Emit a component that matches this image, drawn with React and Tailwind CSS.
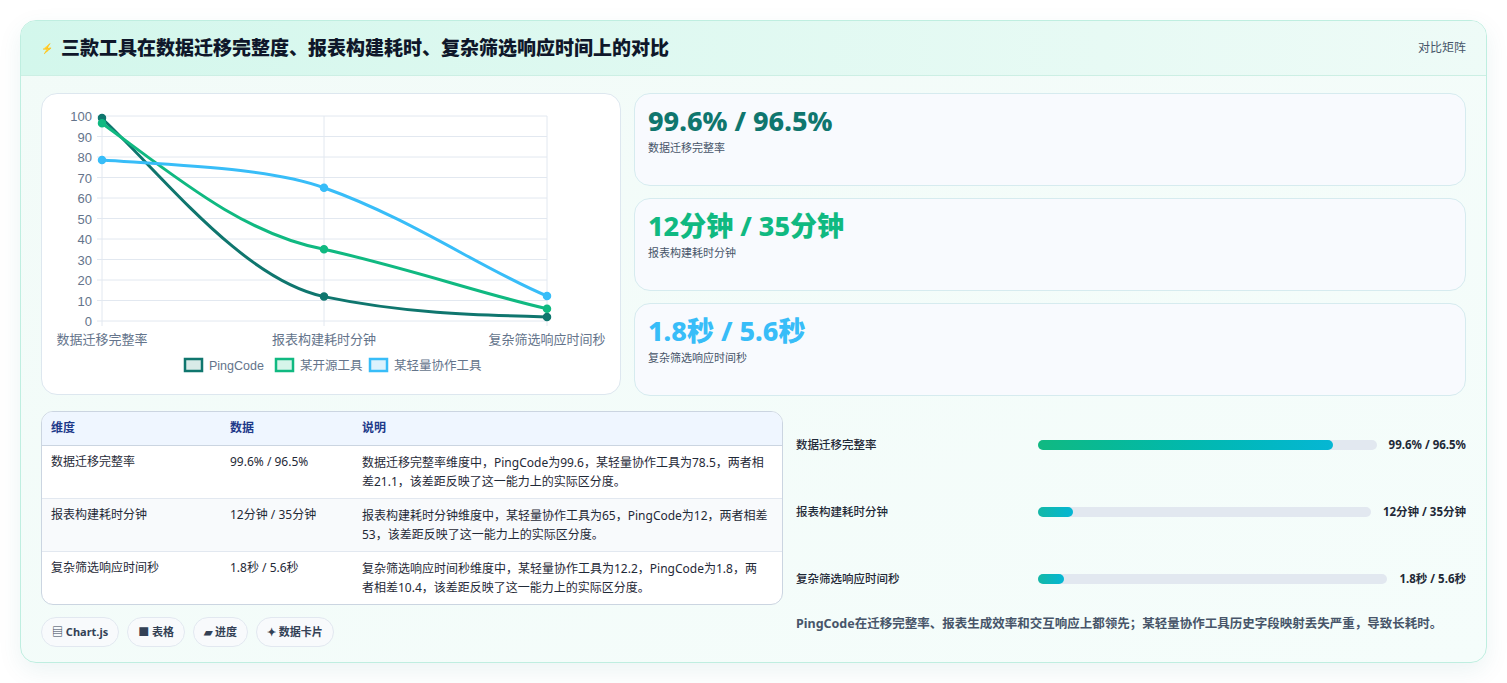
import React from 'react';

const font = { fontFamily: '"Noto Sans", "Noto Sans CJK SC", sans-serif' };

const stats = [
  { v: '99.6% / 96.5%', l: '数据迁移完整率', c: 'text-[#0f766e]' },
  { v: '12分钟 / 35分钟', l: '报表构建耗时分钟', c: 'text-[#10b981]' },
  { v: '1.8秒 / 5.6秒', l: '复杂筛选响应时间秒', c: 'text-[#38bdf8]' },
];

const rows = [
  ['数据迁移完整率', '99.6% / 96.5%', '数据迁移完整率维度中，PingCode为99.6，某轻量协作工具为78.5，两者相差21.1，该差距反映了这一能力上的实际区分度。'],
  ['报表构建耗时分钟', '12分钟 / 35分钟', '报表构建耗时分钟维度中，某轻量协作工具为65，PingCode为12，两者相差53，该差距反映了这一能力上的实际区分度。'],
  ['复杂筛选响应时间秒', '1.8秒 / 5.6秒', '复杂筛选响应时间秒维度中，某轻量协作工具为12.2，PingCode为1.8，两者相差10.4，该差距反映了这一能力上的实际区分度。'],
];

const bars = [
  { l: '数据迁移完整率', v: '99.6% / 96.5%', w: 87, from: 'from-[#10b981]', to: 'to-[#06b6d4]' },
  { l: '报表构建耗时分钟', v: '12分钟 / 35分钟', w: 10.5, from: 'from-[#14b8a6]', to: 'to-[#06b6d4]' },
  { l: '复杂筛选响应时间秒', v: '1.8秒 / 5.6秒', w: 7.5, from: 'from-[#14b8a6]', to: 'to-[#06b6d4]' },
];

const Chart = () => {
  const ticks = [0, 10, 20, 30, 40, 50, 60, 70, 80, 90, 100];
  const y = (v) => 227 - v * 2.05;
  const pts = [
    { c: '#0f766e', d: [99, 12, 2], p: 'M60,24.5 C120,80 200,185 282,202.6 C360,219 430,221 505,222.9' },
    { c: '#10b981', d: [96.5, 35, 6], p: 'M60,29.2 C130,80 200,140 282,155.25 C370,175 440,200 505,214.7' },
    { c: '#38bdf8', d: [78.5, 65, 12.2], p: 'M60,66 C150,72 230,75 282,93.75 C370,125 440,175 505,202' },
  ];
  const xs = [60, 282, 505];
  return (
    <svg width="578" height="300" viewBox="0 0 578 300" style={{ fontFamily: '"Liberation Sans", "Noto Sans CJK SC", sans-serif' }}>
      {ticks.map((t) => (
        <g key={t}>
          <line x1="55" x2="505" y1={y(t)} y2={y(t)} stroke="#e2e8f0" />
          <text x="50" y={y(t) + 5} fontSize="13" fill="#64748b" textAnchor="end">{t}</text>
        </g>
      ))}
      {xs.map((x) => <line key={x} x1={x} x2={x} y1={22} y2={232} stroke="#e2e8f0" />)}
      {['数据迁移完整率', '报表构建耗时分钟', '复杂筛选响应时间秒'].map((t, i) => (
        <text key={t} x={xs[i]} y="250" fontSize="13" fill="#64748b" textAnchor="middle">{t}</text>
      ))}
      {pts.map((s) => (
        <g key={s.c}>
          <path d={s.p} fill="none" stroke={s.c} strokeWidth="3" />
          {s.d.map((v, i) => <circle key={i} cx={xs[i]} cy={y(v)} r="3.5" fill={s.c} stroke={s.c} strokeWidth="1.5" />)}
        </g>
      ))}
      {[
        { x: 143, c: '#0f766e', bg: '#d9ebe8', t: 'PingCode' },
        { x: 234, c: '#10b981', bg: '#d6f5ea', t: '某开源工具' },
        { x: 328, c: '#38bdf8', bg: '#dbf2fd', t: '某轻量协作工具' },
      ].map((l) => (
        <g key={l.t}>
          <rect x={l.x} y="265" width="17" height="12" fill={l.bg} stroke={l.c} strokeWidth="2.5" />
          <text x={l.x + 24} y="276" fontSize="12.5" fill="#64748b">{l.t}</text>
        </g>
      ))}
    </svg>
  );
};

export default function App() {
  return (
    <div className="w-[1507px] h-[683px] bg-white pt-5 px-5" style={font}>
      <div className="w-[1467px] h-[643px] rounded-2xl border border-[#bfeee0] bg-gradient-to-br from-[#f2fbf8] to-[#f5fdfb] shadow-[0_8px_24px_rgba(15,118,110,0.08)] overflow-hidden">
        <div className="h-[55px] flex items-center justify-between px-5 bg-gradient-to-r from-[#d3f7ec] to-[#eefbf7] border-b border-[#ccefe4]">
          <div className="flex items-center gap-2">
            <span className="text-[#3b82f6] text-[10px]">⚡</span>
            <h1 className="text-[19px] font-extrabold text-[#0f172a]">三款工具在数据迁移完整度、报表构建耗时、复杂筛选响应时间上的对比</h1>
          </div>
          <span className="text-xs text-[#475569]">对比矩阵</span>
        </div>
        <div className="px-5 pt-[17px]">
          <div className="grid grid-cols-[580px_1fr] gap-[13px]">
            <div className="h-[302px] rounded-2xl border border-[#dde7ef] bg-white">
              <Chart />
            </div>
            <div className="flex flex-col gap-3">
              {stats.map((s) => (
                <div key={s.l} className="h-[93px] rounded-2xl border border-[#d6ebef] bg-[#f8fafe] px-[13px] pt-2">
                  <div className={`text-[27px] font-extrabold leading-[38px] ${s.c}`}>{s.v}</div>
                  <div className="text-[11px] text-[#475569]">{s.l}</div>
                </div>
              ))}
            </div>
          </div>
          <div className="grid grid-cols-[742px_1fr] gap-[13px] mt-[15px]">
            <div>
              <div className="rounded-xl border border-[#cbd5e1] bg-white overflow-hidden">
                <table className="w-full text-left text-[12px] text-[#1f2937]">
                  <thead>
                    <tr className="bg-[#eff6ff] border-b border-[#cbd5e1] text-[#1e3a8a]">
                      <th className="pl-[9px] h-[33px] w-[188px] font-bold">维度</th>
                      <th className="w-[132px] font-bold">数据</th>
                      <th className="pr-[14px] font-bold">说明</th>
                    </tr>
                  </thead>
                  <tbody>
                    {rows.map((r, i) => (
                      <tr key={i} className={`${i < 2 ? 'border-b border-[#e2e8f0]' : ''} ${i === 1 ? 'bg-[#f8fafc]' : ''} align-top`}>
                        <td className="pl-[9px] pt-[7px] h-[53px]">{r[0]}</td>
                        <td className="pt-[7px]">{r[1]}</td>
                        <td className="pt-[7px] pr-[14px] pb-1 leading-[19px]">{r[2]}</td>
                      </tr>
                    ))}
                  </tbody>
                </table>
              </div>
              <div className="flex gap-2 mt-3">
                {['▤ Chart.js', '■ 表格', '▰ 进度', '✦ 数据卡片'].map((t) => (
                  <span key={t} className="h-[30px] flex items-center px-[10px] rounded-full border border-[#e2e8f0] bg-[#f8fafc] text-[11px] font-bold text-[#334155]">{t}</span>
                ))}
              </div>
            </div>
            <div className="flex flex-col">
              {bars.map((b) => (
                <div key={b.l} className="h-[67px] flex items-center gap-3 text-[11.5px] font-bold text-[#1f2937]">
                  <span className="w-[230px] shrink-0 font-medium">{b.l}</span>
                  <div className="flex-1 h-[10px] rounded-full bg-[#e2e8f0]">
                    <div className={`h-full rounded-full bg-gradient-to-r ${b.from} ${b.to}`} style={{ width: `${b.w}%` }} />
                  </div>
                  <span className="shrink-0">{b.v}</span>
                </div>
              ))}
              <p className="mt-[3px] text-[12.5px] font-bold text-[#475569]">PingCode在迁移完整率、报表生成效率和交互响应上都领先；某轻量协作工具历史字段映射丢失严重，导致长耗时。</p>
            </div>
          </div>
        </div>
      </div>
    </div>
  );
}
